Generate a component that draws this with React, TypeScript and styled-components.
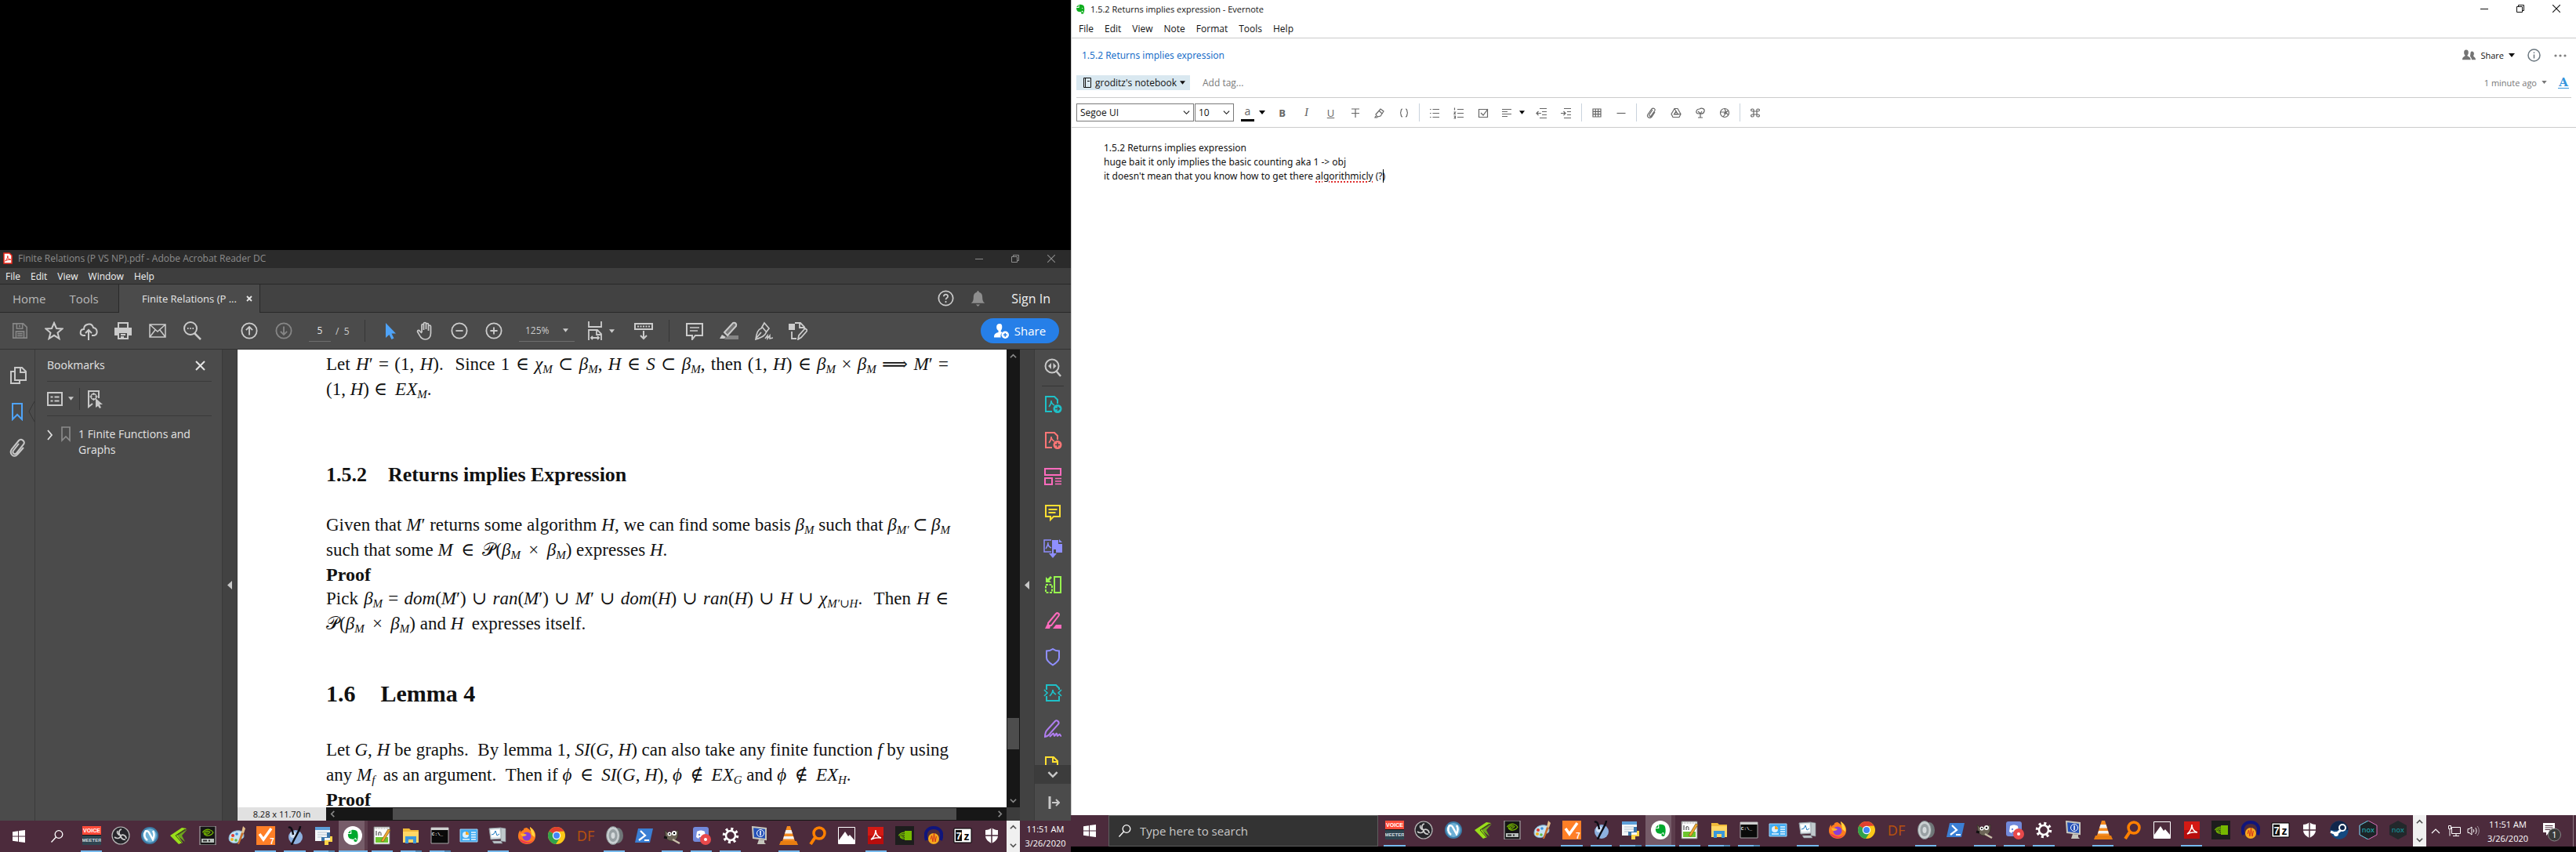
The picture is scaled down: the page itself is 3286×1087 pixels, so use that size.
import React from "react";
import styled, { createGlobalStyle, css } from "styled-components";

const ui = `"Open Sans", "Noto Sans", sans-serif`;
const serif = `"Liberation Serif", "DejaVu Serif", serif`;

const GlobalStyle = createGlobalStyle`
  *, *::before, *::after { box-sizing: border-box; }
  body { margin: 0; background: #000; font-family: ${ui}; font-size: 12px; }
  button, input, select { font: inherit; color: inherit; margin: 0; padding: 0; border: 0; background: none; border-radius: 0; outline: none; }
  svg { display: block; flex: none; }
  h1, h2, h3, p { margin: 0; font-size: inherit; font-weight: normal; }
`;

/* ---------- shared pieces ---------- */

const Desktop = styled.div`
  display: grid;
  grid-template-columns: minmax(0, 1366fr) minmax(0, 1920fr);
  height: 100vh;
  overflow: hidden;
`;

const LeftMonitor = styled.div`
  display: flex;
  flex-direction: column;
  min-height: 0;
`;

const EmptyScreen = styled.div`
  flex: 319 0 0;
`;

const LeftScreen = styled.div`
  flex: 768 0 0;
  min-height: 0;
  display: flex;
  flex-direction: column;
`;

const RightMonitor = styled.div`
  display: flex;
  flex-direction: column;
  min-height: 0;
  padding-bottom: 7px;
`;

type IconProps = { size?: number; children: React.ReactNode; box?: number };

const Stroke = ({ size = 24, box = 24, children }: IconProps) => (
  <svg width={size} height={size} viewBox={`0 0 ${box} ${box}`} fill="none" stroke="currentColor" strokeWidth="2" aria-hidden="true">
    {children}
  </svg>
);

const Art = ({ size = 24, box = 24, children }: IconProps) => (
  <svg width={size} height={size} viewBox={`0 0 ${box} ${box}`} aria-hidden="true">
    {children}
  </svg>
);

const Caret = ({ w = 8, h = 5 }: { w?: number; h?: number }) => (
  <svg width={w} height={h} viewBox="0 0 8 5" aria-hidden="true">
    <path d="M0 0h8L4 5z" fill="currentColor" />
  </svg>
);

const WindowControls = styled.div<{ $tone: string }>`
  display: flex;
  margin-left: auto;
  color: ${(p) => p.$tone};
`;

const WindowButton = styled.button`
  width: 46px;
  height: 20px;
  display: grid;
  place-items: center;
`;

const Controls = ({ tone }: { tone: string }) => (
  <WindowControls $tone={tone}>
    <WindowButton aria-label="Minimize">
      <svg width="10" height="10" stroke="currentColor"><path d="M0 5.5h10" /></svg>
    </WindowButton>
    <WindowButton aria-label="Restore">
      <svg width="10" height="10" stroke="currentColor" fill="none"><path d="M.5 2.500h7v7h-7zM2.500 2.500v-2h7v7h-2" /></svg>
    </WindowButton>
    <WindowButton aria-label="Close">
      <svg width="10" height="10" stroke="currentColor" strokeWidth="1.100"><path d="M0 0l10 10M10 0L0 10" /></svg>
    </WindowButton>
  </WindowControls>
);

/* ---------- Acrobat ---------- */

const Acrobat = styled.section`
  flex: 1;
  min-height: 0;
  display: flex;
  flex-direction: column;
  background: #4b4b4b;
  color: #d2d2d2;
`;

const AcroTitle = styled.header`
  height: 23px;
  display: flex;
  align-items: center;
  gap: 7px;
  padding: 0 2px 2px 4px;
  background: #2b2b2b;
  color: #8c8c8c;
`;

const AcroMenu = styled.nav`
  height: 21px;
  display: flex;
  align-items: center;
  gap: 13px;
  padding-left: 7px;
  background: #3e3e3e;
  color: #f2f2f2;
  border-bottom: 1px solid #292929;
`;

const TabStrip = styled.div`
  height: 36px;
  display: flex;
  background: #424242;
`;

const HomeTabs = styled.div`
  width: 152px;
  display: flex;
  align-items: center;
  gap: 30px;
  padding-left: 16px;
  font-size: 15px;
  color: #b9b9b9;
  border-right: 1px solid #292929;
  border-bottom: 1px solid #292929;
`;

const FileTab = styled.div`
  width: 179px;
  display: flex;
  align-items: center;
  justify-content: space-between;
  padding: 0 9px 0 29px;
  font-size: 13px;
  background: #4b4b4b;
  color: #e6e6e6;
`;

const TabTail = styled.div`
  flex: 1;
  display: flex;
  align-items: center;
  justify-content: flex-end;
  border-left: 1px solid #292929;
  border-bottom: 1px solid #292929;
  padding-right: 26px;
  gap: 20px;
  color: #f0f0f0;
`;

const SignIn = styled.button`
  padding-left: 12px;
  font-size: 16px;
`;

const DimButton = styled.button<{ $tone?: string }>`
  display: grid;
  place-items: center;
  color: ${(p) => p.$tone || "inherit"};
`;

const AcroToolbar = styled.div`
  height: 47px;
  display: flex;
  align-items: center;
  padding: 0 15px 0 3px;
  border-bottom: 1px solid #333;
  color: #cbcbcb;
`;

const Tool = styled.button<{ $tone?: string }>`
  width: 44px;
  height: 44px;
  display: flex;
  align-items: center;
  justify-content: center;
  gap: 6px;
  color: ${(p) => p.$tone || "inherit"};
`;

const Gap = styled.span<{ $w: number }>`
  flex: 0 0 ${(p) => p.$w}px;
`;

const ToolDivider = styled.span<{ $before: number }>`
  width: 1px;
  height: 28px;
  margin: 0 10px 0 ${(p) => p.$before}px;
  background: #363636;
`;

const PageInput = styled.input`
  width: 28px;
  height: 28px;
  text-align: center;
  border-bottom: 1px solid #6e6e6e;
  margin: 0 6px 0 10px;
  color: #e6e6e6;
`;

const PageCount = styled.span`
  width: 17px;
  white-space: pre;
`;

const ZoomBox = styled.label`
  width: 71px;
  height: 28px;
  display: flex;
  align-items: center;
  justify-content: space-between;
  margin: 0 10px;
  padding: 0 8px;
  border-bottom: 1px solid #6e6e6e;
`;

const BareSelect = styled.select`
  appearance: none;
  flex: 1;
  min-width: 0;
`;

const ShareButton = styled.button`
  width: 100px;
  height: 32px;
  margin-left: auto;
  border-radius: 16px;
  background: #267fe8;
  color: #fff;
  display: flex;
  align-items: center;
  justify-content: center;
  gap: 7px;
  font-size: 15px;
`;

const AcroBody = styled.div`
  flex: 1;
  min-height: 0;
  display: flex;
`;

const NavRail = styled.nav`
  width: 45px;
  border-right: 1px solid #3a3a3a;
  display: flex;
  flex-direction: column;
  align-items: stretch;
  padding-top: 10px;
  color: #c8c8c8;
`;

const NavButton = styled.button<{ $active?: boolean }>`
  height: 46px;
  display: flex;
  align-items: center;
  justify-content: space-between;
  padding-left: 11px;
  color: ${(p) => (p.$active ? "#4fa3f7" : "inherit")};
`;

const Bookmarks = styled.aside`
  width: 239px;
  border-right: 1px solid #3a3a3a;
  padding: 0 13px 0 15px;
  font-size: 14px;
  line-height: 20px;
  color: #e4e4e4;
`;

const BookmarksHead = styled.div`
  height: 41px;
  display: flex;
  align-items: center;
  justify-content: space-between;
  padding-right: 8px;
  border-bottom: 1px solid #3a3a3a;
`;

const BookmarksTools = styled.div`
  height: 44px;
  display: flex;
  align-items: center;
  gap: 7px;
  color: #c8c8c8;
  border-bottom: 1px solid #3a3a3a;
`;

const BookmarkRow = styled.button`
  display: flex;
  align-items: flex-start;
  gap: 10px;
  padding-top: 13px;
  width: 100%;
  text-align: left;
  white-space: nowrap;
`;

const Splitter = styled.div`
  width: 19px;
  background: #424242;
  border-right: 1px solid #3a3a3a;
  display: grid;
  place-items: center;
  color: #c8c8c8;
`;

const DocPane = styled.main`
  flex: 1;
  min-width: 0;
  display: flex;
  flex-direction: column;
`;

const Page = styled.article`
  flex: 1;
  min-height: 0;
  overflow: hidden;
  background: #fff;
  color: #111;
  padding: 3px 74px 0 113px;
  font-family: ${serif};
  font-size: 23px;
`;

const Line = styled.p<{ $full?: boolean }>`
  line-height: 32px;
  white-space: nowrap;
  ${(p) => p.$full && css`text-align: justify; text-align-last: justify;`}
  sub { font-size: 15px; line-height: 0; vertical-align: -4px; }
`;

const ProofTitle = styled.h3`
  font-size: 24px;
  font-weight: bold;
  line-height: 30px;
`;

const Subsection = styled.h2`
  display: flex;
  gap: 27px;
  font-size: 26px;
  font-weight: bold;
  line-height: 32px;
  margin: 77px 0 32px;
`;

const Section = styled.h1`
  display: flex;
  gap: 32px;
  font-size: 30px;
  font-weight: bold;
  line-height: 32px;
  margin: 57px 0 40px;
`;

const HScroll = styled.div`
  height: 17px;
  display: flex;
  background: #171717;
  color: #8a8a8a;
`;

const PageSize = styled.span`
  width: 113px;
  background: #e1e1e1;
  color: #111;
  text-align: center;
  font-size: 11px;
  line-height: 17px;
`;

const ScrollEnd = styled.button`
  width: 17px;
  height: 17px;
  display: grid;
  place-items: center;
`;

const HTrack = styled.div`
  flex: 1;
  padding: 1px 47px 1px 68px;
`;

const Thumb = styled.div<{ $h: number }>`
  height: ${(p) => p.$h}px;
  background: #4d4d4d;
`;

const VScroll = styled.div`
  width: 17px;
  display: flex;
  flex-direction: column;
  background: #171717;
  color: #8a8a8a;
`;

const VTrack = styled.div`
  flex: 1;
  display: flex;
  flex-direction: column;
  justify-content: flex-end;
  padding: 0 1px 57px;
`;

const Corner = styled.div`
  height: 17px;
  background: #3c3c3c;
`;

const ToolRail = styled.aside`
  width: 46px;
  display: flex;
  flex-direction: column;
  color: #c8c8c8;
`;

const RailFirst = styled.div`
  height: 47px;
  display: flex;
  justify-content: center;
  align-items: center;
  margin: 0 9px;
  border-bottom: 1px solid #363636;
`;

const RailList = styled.div`
  flex: 1;
  min-height: 0;
  overflow: hidden;
  display: flex;
  flex-direction: column;
`;

const RailTool = styled.button<{ $tone: string }>`
  flex: 0 0 46px;
  display: grid;
  place-items: center;
  color: ${(p) => p.$tone};
`;

const RailMore = styled.button`
  height: 24px;
  background: #3c3c3c;
  display: grid;
  place-items: center;
`;

const RailExport = styled.button`
  height: 47px;
  display: grid;
  place-items: center;
`;

const TriLeft = () => (
  <svg width="6" height="11" aria-hidden="true"><path d="M6 0v11L0 5.500z" fill="currentColor" /></svg>
);

const Chev = ({ dir, size = 9, weight = 1.8 }: { dir: "up" | "down" | "left" | "right"; size?: number; weight?: number }) => {
  const d = { up: "M1 7l4-4 4 4", down: "M1 3l4 4 4-4", left: "M7 1L3 5l4 4", right: "M3 1l4 4-4 4" }[dir];
  return (
    <svg width={size} height={size} viewBox="0 0 10 10" fill="none" stroke="currentColor" strokeWidth={weight} aria-hidden="true">
      <path d={d} />
    </svg>
  );
};

const railTools: { label: string; tone: string; art: React.ReactNode }[] = [
  { label: "Export PDF", tone: "#1fc0c7", art: <><path d="M11 21H3V2h11l4 4v5" /><path d="M7 15c2-2 3-4 3-8 0 3 2 5 4 6" strokeWidth="1.500" /><circle cx="18" cy="17.500" r="5.500" fill="currentColor" stroke="none" /><path d="M15 17.500h5M18 15l2.500 2.500L18 20" stroke="#4b4b4b" strokeWidth="1.500" /></> },
  { label: "Create PDF", tone: "#ff7676", art: <><path d="M11 21H3V2h11l4 4v5" /><path d="M7 15c2-2 3-4 3-8 0 3 2 5 4 6" strokeWidth="1.500" /><circle cx="18" cy="17.500" r="5.500" fill="currentColor" stroke="none" /><path d="M15 17.500h6M18 14.500v6" stroke="#4b4b4b" strokeWidth="1.500" /></> },
  { label: "Edit PDF", tone: "#ff6bbd", art: <><path d="M2 2h20v8H2zM2 14h9v8H2z" /><path d="M15 14.500h8M15 18h8M15 21.500h8" strokeWidth="1.300" /></> },
  { label: "Comment", tone: "#ffdf32", art: <><path d="M3 3h18v14h-8l-4 4v-4H3z" /><path d="M6.500 8h11M6.500 12h9" /></> },
  { label: "Combine Files", tone: "#8f8fff", art: <><path d="M10 16H1V1h9M6 4c0 4-1 5-3 8M6 6c0 3 2 4 4 5" strokeWidth="1.500" /><path d="M11 1h8v5h5v11h-8v-4h-5zM20 0l4 4h-4z" fill="currentColor" stroke="none" /><path d="M12 10v8" /><path d="M7 18h10l-5 6z" fill="currentColor" stroke="none" /></> },
  { label: "Organize Pages", tone: "#97f84f", art: <><path d="M14 2h8v20h-8z" /><path d="M3 12h8v10H3z" strokeDasharray="3 1.500" /><path d="M3 9V2l2.500 2.500L9 1l2 2-3.500 3.500L10 9z" fill="currentColor" stroke="none" /></> },
  { label: "Redact", tone: "#ff6bbd", art: <><path d="M6 15L16 3c2-2 5 0 3.500 2.500L10 18H6z" /><path d="M2 22l3-6 4 3-1 3zM12 22l4-5h7v5z" fill="currentColor" stroke="none" /></> },
  { label: "Protect", tone: "#8f8fff", art: <path d="M12 2c2 1.500 5 2.500 8 2.500V13c0 4-4 7-8 9.500C8 20 4 17 4 13V4.500C7 4.500 10 3.500 12 2z" /> },
  { label: "Optimize PDF", tone: "#1fc0c7", art: <><path d="M4 8V2h12l4 4v2M4 16v6h16v-6" /><path d="M1 8l4 4-4 4M23 8l-4 4 4 4M8 16c2-2 4-4 4-8 0 3 2 5 4 6" strokeWidth="1.700" /></> },
  { label: "Fill & Sign", tone: "#b07ef0", art: <><path d="M2 22c0-4 1-7 3-9L15 2c2-2 6 1 4 4L9 17c-1 2-3 4-7 5zM8 22l4-4c2-1 1 3 2 3s2-4 3-3 0 3 1 3 2-3 3-2 0 2 2 2" /></> },
  { label: "Send for Review", tone: "#ffdf32", art: <><path d="M10 22H3V2h10l5 5v5M12 2v6h6" /><path d="M12 18l11-5-4 10z" fill="currentColor" stroke="none" /></> },
];

const AcrobatWindow = () => (
  <Acrobat aria-label="Adobe Acrobat Reader DC">
    <AcroTitle>
      <svg width="12" height="15" viewBox="0 0 12 15" aria-hidden="true">
        <path d="M1 1h7l3 3v10H1z" fill="#fff" stroke="#f0281a" strokeWidth="1.500" />
        <path d="M2.500 11C5 9 5.800 7 5.800 4.500c0 3 1.500 4.500 4 4.700-3 0-5 .4-7.300 1.800z" fill="none" stroke="#f0281a" />
      </svg>
      <span>Finite Relations (P VS NP).pdf - Adobe Acrobat Reader DC</span>
      <Controls tone="#8c8c8c" />
    </AcroTitle>
    <AcroMenu>
      {["File", "Edit", "View", "Window", "Help"].map((m) => <button key={m}>{m}</button>)}
    </AcroMenu>
    <TabStrip>
      <HomeTabs><button>Home</button><button>Tools</button></HomeTabs>
      <FileTab>
        <span>Finite Relations (P ...</span>
        <DimButton aria-label="Close tab"><Stroke size={8} box={8}><path d="M1 1l6 6M7 1L1 7" strokeWidth="1.800" /></Stroke></DimButton>
      </FileTab>
      <TabTail>
        <DimButton aria-label="Help" $tone="#cbcbcb">
          <Stroke size={21}><circle cx="12" cy="12" r="10.500" /><path d="M9 9.500c0-4 6-4 6 0 0 2-3 2-3 4.500M12 16v2.500" /></Stroke>
        </DimButton>
        <DimButton aria-label="Notifications" $tone="#8e8e8e">
          <Art size={21}><path d="M12 1c1 0 1.500 1 1.500 2 4 1 5 4 5 8 0 4 1 6 3.500 8H2c2.500-2 3.500-4 3.500-8 0-4 1-7 5-8C10.500 2 11 1 12 1zM9 21h6l-3 3z" fill="currentColor" /></Art>
        </DimButton>
        <SignIn>Sign In</SignIn>
      </TabTail>
    </TabStrip>
    <AcroToolbar>
      <Tool aria-label="Save" $tone="#868686"><Stroke size={22}><path d="M3 2h14l5 5v15H3zM8 2v7h8V2M12 4v3M7 22v-9h11v9M9 16h7M9 19h7" strokeWidth="1.800" /></Stroke></Tool>
      <Tool aria-label="Star"><Stroke><path d="M12 2l3 7 7.500.5-6 5 2 7.500-6.500-4.200L5.500 22l2-7.500-6-5L9 9z" /></Stroke></Tool>
      <Tool aria-label="Upload"><Stroke><path d="M8 18H5c-5-1-4-8 1-8 0-7 10-9 12-2 6 1 6 9 1 10h-3M12 24V11M8 15l4-4 4 4" /></Stroke></Tool>
      <Tool aria-label="Print"><Stroke><path d="M6 8V2h12v6M6 14h12v8H6zM9 17h6M9 20h4" /><path d="M1 8h22v10h-4v-5H5v5H1z" fill="currentColor" stroke="none" /></Stroke></Tool>
      <Tool aria-label="Email"><Stroke><path d="M2 4h20v16H2zM2 4l10 9L22 4M2 20l7-9M22 20l-7-9" strokeWidth="1.500" /></Stroke></Tool>
      <Tool aria-label="Find"><Stroke><circle cx="10" cy="9" r="8" /><path d="M15 15l8 8" strokeWidth="2.500" /><path d="M6 9h1.500M9.300 9h1.500M12.500 9H14" /></Stroke></Tool>
      <Gap $w={29} />
      <Tool aria-label="Previous page"><Stroke size={22}><circle cx="12" cy="12" r="10.500" /><path d="M12 18V7M7.500 11L12 6.500l4.500 4.500" /></Stroke></Tool>
      <Tool aria-label="Next page" $tone="#868686"><Stroke size={22}><circle cx="12" cy="12" r="10.500" /><path d="M12 6v11M7.500 13l4.500 4.500 4.500-4.500" /></Stroke></Tool>
      <PageInput aria-label="Page number" defaultValue="5" />
      <PageCount>/  5</PageCount>
      <ToolDivider $before={20} />
      <Tool aria-label="Select" $tone="#4fa3f7"><Art><path d="M6 2v19l4.500-4 3 6 3-1.500-3-6H19z" fill="currentColor" /></Art></Tool>
      <Tool aria-label="Pan"><Stroke><path d="M8 14V5c0-2 2.500-2 2.500 0v6M10.500 10V3c0-2 3-2 3 0v7M13.500 10V4c0-2 3-2 3 0v8M16.500 11V6.500c0-2 3-2 3 0V15c0 5-3 8-7 8-5 0-6-3-10-10 0-2 2-2 3-.5L8 15" strokeWidth="1.700" /></Stroke></Tool>
      <Tool aria-label="Zoom out"><Stroke size={22}><circle cx="12" cy="12" r="10.500" /><path d="M7 12h10" /></Stroke></Tool>
      <Tool aria-label="Zoom in"><Stroke size={22}><circle cx="12" cy="12" r="10.500" /><path d="M7 12h10M12 7v10" /></Stroke></Tool>
      <ZoomBox>
        <BareSelect aria-label="Zoom level" defaultValue="125%"><option>125%</option></BareSelect>
        <Caret w={7} />
      </ZoomBox>
      <Tool aria-label="Fit width"><Stroke><path d="M4 0v7h16V0M4 24V11h11l5 5v8M14 11v6h6M7 21h10M9 19l-2 2 2 2M15 19l2 2-2 2" strokeWidth="1.800" /></Stroke><Caret w={7} /></Tool>
      <Gap $w={12} />
      <Tool aria-label="Scroll mode"><Stroke><path d="M1 3h22v7H1zM12 12v10M8 18l4 4 4-4" /><path d="M4 6.500h16" strokeDasharray="2 1.500" /></Stroke></Tool>
      <ToolDivider $before={10} />
      <Tool aria-label="Comment"><Stroke><path d="M2 3h20v15h-9l-4 5v-5H2z" /><path d="M6 8h12M6 12h10" strokeWidth="1.500" /></Stroke></Tool>
      <Tool aria-label="Highlight"><Stroke><path d="M10 18h14v5H6z" fill="#858585" stroke="none" /><path d="M6 14L17 2c3-1 5 1 4 4L10 18z" fill="#777" /><path d="M0 22l3-5 5 3-2 2z" fill="currentColor" stroke="none" /></Stroke></Tool>
      <Tool aria-label="Sign"><Stroke><path d="M13 2l6 7-3 4c-2 5-5 7-14 10 1-8 3-13 7-14zM3 21l6-7M10 7l6 7" strokeWidth="1.700" /><path d="M14 22l3-4v4l3-4v4l4-1" strokeWidth="1.500" /></Stroke></Tool>
      <Tool aria-label="More tools"><Stroke><path d="M0 3h8v8H0z" fill="currentColor" stroke="none" /><path d="M8 2h7l5 5v3M14 2v6h6M4 13v9h6M12 23l1-5 8-9 3 2.500-8 9z" strokeWidth="1.800" /></Stroke></Tool>
      <ShareButton>
        <Art size={19}><path d="M9 0c3 0 4 2 4 5s-1 5-2 6v2l3 1c-3 2-4 5-3 8H0c0-6 3-7 7-8v-3C5 10 4 8 4 5s2-5 5-5z" fill="#fff" /><circle cx="18" cy="18" r="6" fill="#fff" /><path d="M15 18h6M18 15v6" stroke="#267fe8" strokeWidth="1.800" /></Art>
        Share
      </ShareButton>
    </AcroToolbar>
    <AcroBody>
      <NavRail>
        <NavButton aria-label="Page thumbnails"><Stroke><path d="M8 6V2h9l5 5v11H8V6M15 2v6h7M7 7H3v15h11v-4" /></Stroke></NavButton>
        <NavButton aria-label="Bookmarks" $active>
          <Stroke><path d="M5 2h12v20l-6-6-6 6z" /></Stroke>
          <svg width="8" height="26" aria-hidden="true"><path d="M8 0L1 13l7 13" fill="none" stroke="#353535" /></svg>
        </NavButton>
        <NavButton aria-label="Attachments"><Stroke><path d="M13 6l-7 9c-2 3 2 6 4 3l9-11c3-4-3-8-6-5L4 13c-4 6 3 12 7 7l8-9" transform="translate(0 1)" /></Stroke></NavButton>
      </NavRail>
      <Bookmarks>
        <BookmarksHead>
          <h2>Bookmarks</h2>
          <DimButton aria-label="Close bookmarks"><Stroke size={13} box={13}><path d="M1 1l11 11M12 1L1 12" /></Stroke></DimButton>
        </BookmarksHead>
        <BookmarksTools>
          <Stroke size={20} box={20}><path d="M1 2h18v16H1z" /><path d="M4.500 7.500h3M9.500 7.500h6M4.500 12.500h3M9.500 12.500h6" /></Stroke>
          <Caret w={7} />
          <svg width="1" height="28" aria-hidden="true"><path d="M0 0h1v28H0z" fill="#363636" /></svg>
          <Stroke size={24}><path d="M9 18l-5 4V2h13v9" /><circle cx="10.500" cy="9" r="3.500" strokeWidth="1.500" /><path d="M10.500 4v3M10.500 11v3M5.500 9h3M12.500 9h3" strokeWidth="1.500" /><path d="M13 11v12l3-2 2 3 2-1-2-4h4z" fill="currentColor" stroke="none" /></Stroke>
        </BookmarksTools>
        <BookmarkRow>
          <svg width="8" height="20" fill="none" stroke="#dedede" strokeWidth="1.800" aria-hidden="true"><path d="M1 5l5 6-5 6" /></svg>
          <svg width="12" height="20" fill="none" stroke="#8c8c8c" strokeWidth="1.600" aria-hidden="true"><path d="M1 1h10v17l-5-5-5 5z" /></svg>
          <span>1 Finite Functions and<br />Graphs</span>
        </BookmarkRow>
      </Bookmarks>
      <Splitter><TriLeft /></Splitter>
      <DocPane>
        <Page>
          <Line $full>Let <i>H</i>′ = (1, <i>H</i>). &nbsp;Since 1 ∈ <i>χ<sub>M</sub></i> ⊂ <i>β<sub>M</sub></i>, <i>H</i> ∈ <i>S</i> ⊂ <i>β<sub>M</sub></i>, then (1, <i>H</i>) ∈ <i>β<sub>M</sub></i> × <i>β<sub>M</sub></i> ⟹ <i>M</i>′ =</Line>
          <Line>(1, <i>H</i>) ∈ &thinsp;<i>EX<sub>M</sub></i>.</Line>
          <Subsection><span>1.5.2</span><span>Returns implies Expression</span></Subsection>
          <Line $full>Given that <i>M</i>′ returns some algorithm <i>H</i>, we can find some basis <i>β<sub>M</sub></i> such that <i>β<sub>M′</sub></i>&thinsp;⊂&thinsp;<i>β<sub>M</sub></i></Line>
          <Line>such that some <i>M</i> &thinsp;∈ &thinsp;𝒫(<i>β<sub>M</sub></i> &thinsp;× &thinsp;<i>β<sub>M</sub></i>) expresses <i>H</i>.</Line>
          <ProofTitle>Proof</ProofTitle>
          <Line $full>Pick <i>β<sub>M</sub></i> = <i>dom</i>(<i>M</i>′) ∪ <i>ran</i>(<i>M</i>′) ∪ <i>M</i>′ ∪ <i>dom</i>(<i>H</i>) ∪ <i>ran</i>(<i>H</i>) ∪ <i>H</i> ∪ <i>χ<sub>M′∪H</sub></i>. &nbsp;Then <i>H</i> ∈</Line>
          <Line>𝒫(<i>β<sub>M</sub></i> &thinsp;× &thinsp;<i>β<sub>M</sub></i>) and <i>H</i> &thinsp;expresses itself.</Line>
          <Section><span>1.6</span><span>Lemma 4</span></Section>
          <Line $full>Let <i>G</i>, <i>H</i> be graphs. &nbsp;By lemma 1, <i>SI</i>(<i>G</i>, <i>H</i>) can also take any finite function <i>f</i> by using</Line>
          <Line>any <i>M<sub>f</sub></i> &thinsp;as an argument. &nbsp;Then if <i>ϕ</i> &thinsp;∈ &thinsp;<i>SI</i>(<i>G</i>, <i>H</i>), <i>ϕ</i> &thinsp;∉ &thinsp;<i>EX<sub>G</sub></i> and <i>ϕ</i> &thinsp;∉ &thinsp;<i>EX<sub>H</sub></i>.</Line>
          <ProofTitle>Proof</ProofTitle>
        </Page>
        <HScroll>
          <PageSize>8.28 x 11.70 in</PageSize>
          <ScrollEnd aria-label="Scroll left"><Chev dir="left" /></ScrollEnd>
          <HTrack><Thumb $h={15} /></HTrack>
          <ScrollEnd aria-label="Scroll right"><Chev dir="right" /></ScrollEnd>
        </HScroll>
      </DocPane>
      <VScroll>
        <ScrollEnd aria-label="Scroll up"><Chev dir="up" /></ScrollEnd>
        <VTrack><Thumb $h={40} /></VTrack>
        <ScrollEnd aria-label="Scroll down"><Chev dir="down" /></ScrollEnd>
        <Corner />
      </VScroll>
      <Splitter><TriLeft /></Splitter>
      <ToolRail>
        <RailFirst>
          <Stroke><circle cx="11" cy="10" r="8.500" /><path d="M16 16l6 7" strokeWidth="2.500" /><path d="M10 6v8l-4-4zM12.500 6v8l4-4z" fill="currentColor" stroke="none" /></Stroke>
        </RailFirst>
        <RailList>
          {railTools.map((t) => (
            <RailTool key={t.label} aria-label={t.label} $tone={t.tone}><Stroke>{t.art}</Stroke></RailTool>
          ))}
        </RailList>
        <RailMore aria-label="More tools"><Chev dir="down" size={14} /></RailMore>
        <RailExport aria-label="Collapse pane">
          <Stroke size={18} box={18}><path d="M5 1v16" strokeWidth="3" /><path d="M8 9h8M13 5l4 4-4 4" /></Stroke>
        </RailExport>
      </ToolRail>
    </AcroBody>
  </Acrobat>
);

/* ---------- Evernote ---------- */

const Evernote = styled.section`
  flex: 1;
  min-height: 0;
  display: flex;
  flex-direction: column;
  background: #fff;
  color: #111;
  border-left: 1px solid #c8c8c8;
`;

const NoteTitleBar = styled.header`
  height: 24px;
  display: flex;
  align-items: center;
  gap: 6px;
  padding: 0 2px 2px 5px;
  font-size: 11px;
`;

const NoteMenu = styled.nav`
  height: 25px;
  display: flex;
  align-items: center;
  gap: 14px;
  padding-left: 9px;
  border-bottom: 1px solid #cbcbcb;
`;

const NoteHead = styled.div`
  height: 43px;
  display: flex;
  align-items: center;
  justify-content: space-between;
  padding: 0 12px 0 13px;
`;

const NoteName = styled.input`
  width: 400px;
  font-family: "Noto Sans", sans-serif;
  color: #1a6fc9;
`;

const HeadActions = styled.div`
  display: flex;
  align-items: center;
  gap: 6px;
  font-size: 11px;
`;

const SoftButton = styled.button<{ $tone?: string }>`
  display: flex;
  align-items: center;
  gap: 6px;
  color: ${(p) => p.$tone || "inherit"};
`;

const TagRow = styled.div`
  height: 33px;
  display: flex;
  align-items: center;
  margin: 0 6px;
  padding-bottom: 6px;
  border-bottom: 1px solid #cbcbcb;
`;

const NotebookChip = styled.button`
  width: 145px;
  height: 19px;
  display: flex;
  align-items: center;
  gap: 4px;
  padding-left: 9px;
  background: #d9e8f0;
`;

const TagInput = styled.input`
  flex: 1;
  margin-left: 16px;
  &::placeholder { color: #7a7a7a; opacity: 1; }
`;

const TagActions = styled.div`
  display: flex;
  align-items: center;
  gap: 13px;
  padding-right: 2px;
  font-size: 11px;
  color: #767676;
`;

const FormatBar = styled.div`
  height: 38px;
  display: flex;
  align-items: center;
  padding-left: 6px;
  border-bottom: 1px solid #cbcbcb;
  color: #666;
`;

const SelectBox = styled.label<{ $w: number }>`
  width: ${(p) => p.$w}px;
  height: 23px;
  display: flex;
  align-items: center;
  margin-right: 1px;
  padding: 0 4px;
  border: 1px solid #7a7a7a;
  color: #111;
`;

const ColorButton = styled.button`
  width: 45px;
  height: 28px;
  display: flex;
  align-items: center;
  gap: 6px;
  padding-left: 8px;
  color: #000;
`;

const ColorSwatch = styled.span`
  width: 17px;
  height: 22px;
  line-height: 17px;
  border-bottom: 3px solid #000;
  font-size: 14px;
  color: #666;
`;

const Fmt = styled.button<{ $w?: number; $look?: string }>`
  width: ${(p) => p.$w || 31}px;
  height: 28px;
  display: flex;
  align-items: center;
  justify-content: center;
  gap: 8px;
  font-size: 13px;
  ${(p) => p.$look === "bold" && css`font-weight: bold;`}
  ${(p) => p.$look === "italic" && css`font-style: italic; font-family: ${serif}; font-size: 15px;`}
  ${(p) => p.$look === "under" && css`text-decoration: underline;`}
`;

const BlackCaret = styled.span`
  color: #000;
`;

const FmtDivider = styled.span`
  width: 1px;
  height: 23px;
  margin: 0 3px 0 4px;
  background: #c9d3dd;
`;

const NoteBody = styled.div`
  flex: 1;
  min-height: 0;
  padding: 17px 41px;
  font-family: "Noto Sans", sans-serif;
  font-size: 12px;
  line-height: 18px;
  outline: none;
`;

const Misspelled = styled.span`
  text-decoration: underline dotted #e03030 2px;
  text-underline-offset: 2px;
`;

const TextCursor = styled.span`
  border-left: 1px solid #000;
  margin-right: -1px;
`;

const Elephant = ({ size, tone }: { size: number; tone: string }) => (
  <Art size={size}>
    <path d="M7 6V2L2 7.500h4zM8.500 1.500C14 .5 19 2 20 6c1.500 6 1 12-1 16-1 2-6 2-6-1 0-2 2-3 3.500-2.500v2h1.500c0-3-1-5-3-4-1 3-4 2.500-6 2C4 18 2 15 2 9h6.500z" fill={tone} />
    <ellipse cx="16" cy="10" rx="1.300" ry="1" fill="#fff" />
  </Art>
);

const line = (d: string, extra?: React.ReactNode) => (
  <svg width="16" height="16" viewBox="0 0 16 16" fill="none" stroke="currentColor" strokeWidth="1.200" aria-hidden="true">
    <path d={d} />
    {extra}
  </svg>
);

const EvernoteWindow = () => (
  <Evernote aria-label="Evernote">
    <NoteTitleBar>
      <Elephant size={13} tone="#0fae1f" />
      <span>1.5.2 Returns implies expression - Evernote</span>
      <Controls tone="#111" />
    </NoteTitleBar>
    <NoteMenu>
      {["File", "Edit", "View", "Note", "Format", "Tools", "Help"].map((m) => <button key={m}>{m}</button>)}
    </NoteMenu>
    <NoteHead>
      <NoteName aria-label="Note title" defaultValue="1.5.2 Returns implies expression" />
      <HeadActions>
        <SoftButton>
          <Art size={17}><path d="M7 2c3 0 4 2 4 5s-1 4-2 5c0 3 6 2 6 8H0c0-6 5-5 5-8-1-1-2-2-2-5s1-5 4-5zM17 5c3 0 4 2 4 4s-1 3-1 4c0 2 4 2 4 7h-7c0-4-3-5-3-7 1-1 0-8 3-8z" fill="#747474" /></Art>
          Share
        </SoftButton>
        <SoftButton aria-label="Share options"><Caret /></SoftButton>
        <Gap $w={4} />
        <SoftButton aria-label="Note info" $tone="#6c7880">
          <svg width="17" height="17" viewBox="0 0 17 17" fill="none" stroke="currentColor" strokeWidth="1.500" aria-hidden="true"><circle cx="8.500" cy="8.500" r="7.500" /><path d="M8.500 7.500v5M8.500 4.500V6" /></svg>
        </SoftButton>
        <Gap $w={5} />
        <SoftButton aria-label="More" $tone="#808080">
          <svg width="16" height="4" fill="currentColor" aria-hidden="true"><circle cx="2" cy="2" r="1.600" /><circle cx="8" cy="2" r="1.600" /><circle cx="14" cy="2" r="1.600" /></svg>
        </SoftButton>
      </HeadActions>
    </NoteHead>
    <TagRow>
      <NotebookChip>
        <svg width="11" height="13" fill="none" stroke="#111" aria-hidden="true"><path d="M.5.5h9v12h-9zM2.500.5v12M5 4.500h3" /></svg>
        groditz's notebook
        <Caret w={7} />
      </NotebookChip>
      <TagInput aria-label="Add tag" placeholder="Add tag..." />
      <TagActions>
        <SoftButton>1 minute ago<Caret w={7} h={4} /></SoftButton>
        <SoftButton aria-label="Text style" $tone="#3595dc">
          <svg width="16" height="20" viewBox="0 0 16 20" aria-hidden="true">
            <text x="8" y="15" textAnchor="middle" fontFamily="DejaVu Serif" fontWeight="bold" fontSize="15" fill="currentColor">A</text>
            <path d="M1 17.500h14" stroke="currentColor" />
          </svg>
        </SoftButton>
      </TagActions>
    </TagRow>
    <FormatBar>
      <SelectBox $w={150}><BareSelect aria-label="Font" defaultValue="Segoe UI"><option>Segoe UI</option></BareSelect><Chev dir="down" weight={1.2} /></SelectBox>
      <SelectBox $w={50}><BareSelect aria-label="Font size" defaultValue="10"><option>10</option></BareSelect><Chev dir="down" weight={1.2} /></SelectBox>
      <ColorButton aria-label="Text colour"><ColorSwatch>a</ColorSwatch><Caret /></ColorButton>
      <Fmt $look="bold">B</Fmt>
      <Fmt $look="italic">I</Fmt>
      <Fmt $look="under">U</Fmt>
      <Fmt aria-label="Strikethrough">{line("M3 3h10M8 3v11M3 8.500h10")}</Fmt>
      <Fmt aria-label="Highlight">{line("M3 10l6-7 4 3-4 6-4 1zM3 12l-1 2h3M7 5l4 4")}</Fmt>
      <Fmt aria-label="Code">{line("M6 3C3 3 5 8 3 8c2 0 0 5 3 5M10 3c3 0 1 5 3 5-2 0 0 5-3 5")}</Fmt>
      <FmtDivider />
      <Fmt aria-label="Bulleted list">{line("M5.500 3.500H14M5.500 8.500H14M5.500 13.500H14M2 3.500h1.500M2 8.500h1.500M2 13.500h1.500")}</Fmt>
      <Fmt aria-label="Numbered list">{line("M6 3.500h8M6 8.500h8M6 13.500h8M2.500 1.500v3M1.500 7h2L2 9.500h2M1.500 12h2v3h-2M2 13.500h1.500")}</Fmt>
      <Fmt aria-label="Checkbox">{line("M2.500 3.500h11v10h-11zM5 8l3 3 6-8")}</Fmt>
      <Fmt aria-label="Align" $w={44}>{line("M2 3.500h12M2 6.500h7M2 9.500h12M2 12.500h7")}<BlackCaret><Caret w={7} /></BlackCaret></Fmt>
      <Fmt aria-label="Outdent">{line("M5 2.500h9M8 6.500h6M8 10.500h6M5 14.500h9M1 8.500h6M3.500 6L1 8.500 3.500 11")}</Fmt>
      <Fmt aria-label="Indent">{line("M5 2.500h9M9 6.500h5M9 10.500h5M5 14.500h9M1 8.500h6M4.500 6L7 8.500 4.500 11")}</Fmt>
      <FmtDivider />
      <Fmt aria-label="Table">{line("M3 3h10v10H3zM3 6.300h10M3 9.600h10M6.300 3v10M9.600 3v10")}</Fmt>
      <Fmt aria-label="Horizontal rule">{line("M2.500 8.500h11")}</Fmt>
      <FmtDivider />
      <Fmt aria-label="Attach">{line("M9 4l-4 6c-1 2 1 3 2 2l5-7c1-2-2-4-4-2L3 10c-2 3 2 6 5 3l4-6")}</Fmt>
      <Fmt aria-label="Drive">{line("M6 2.500h4l4 7-2 4H4l-2-4zM8 6l2.500 4h-5zM6 2.500L10.500 10M14 9.500H6")}</Fmt>
      <Fmt aria-label="Insert photo">{line("M8 14V9M5 14h6M5 9c-4-1-2-6 2-6 3-2 7 0 6 3-1 4-4 3-5 3zM5 6l3 3 2-3")}</Fmt>
      <Fmt aria-label="Camera">{line("M8 2.500L10 8l-4 5M2.500 7H9l4 4M13 5L7 9", <circle cx="8" cy="8" r="5.500" />)}</Fmt>
      <FmtDivider />
      <Fmt aria-label="Shortcuts">{line("M6 6v4h4V6zM6 6H4.500C2 6 2 3 4.300 3S6 4 6 6zM10 6h1.500C14 6 14 3 11.700 3S10 4 10 6zM6 10H4.500C2 10 2 13 4.300 13S6 12 6 10zM10 10h1.500c2.500 0 2.500 3 .2 3S10 12 10 10z")}</Fmt>
    </FormatBar>
    <NoteBody contentEditable suppressContentEditableWarning spellCheck={false} role="textbox" aria-label="Note">
      <p>1.5.2 Returns implies expression</p>
      <p>huge bait it only implies the basic counting aka 1 -&gt; obj</p>
      <p>it doesn't mean that you know how to get there <Misspelled>algorithmicly</Misspelled> (?<TextCursor />)</p>
    </NoteBody>
  </Evernote>
);

/* ---------- Taskbar ---------- */

const Bar = styled.footer`
  height: 40px;
  flex: none;
  display: flex;
  background: #4c2b3c;
  color: #fff;
`;

const BarButton = styled.button<{ $w: number }>`
  flex: 0 0 ${(p) => p.$w}px;
  display: grid;
  place-items: center;
`;

const SearchBox = styled.label`
  flex: 0 0 344px;
  display: flex;
  align-items: center;
  gap: 11px;
  padding-left: 12px;
  background: #333;
  border: 1px solid #5e5e5e;
`;

const SearchInput = styled.input`
  flex: 1;
  min-width: 0;
  font-size: 15px;
  &::placeholder { color: #c8c8c8; opacity: 1; }
`;

const Apps = styled.div`
  flex: 1;
  display: flex;
  min-width: 0;
`;

const AppButton = styled.button<{ $state?: string }>`
  flex: 1 1 0;
  min-width: 0;
  display: grid;
  grid-template-rows: 1fr 2px;
  justify-items: center;
  align-items: center;
  padding: 0 3px;
  ${(p) => p.$state === "active" && css`background: linear-gradient(90deg, #765c69 88%, #5c3d4c 88%);`}
  &::after {
    content: "";
    justify-self: stretch;
    height: 2px;
    margin: 0 ${(p) => (p.$state === "active" ? -3 : 2)}px;
    background: ${(p) =>
      !p.$state ? "none" : p.$state === "multi" ? "linear-gradient(90deg, #76b9ed 72%, #4f87b3 72%)" : "#76b9ed"};
  }
`;

const BarScroll = styled.div`
  flex: 0 0 17px;
  display: flex;
  flex-direction: column;
  justify-content: space-between;
  align-items: center;
  background: #f0f0f0;
  color: #505050;
`;

const Clock = styled.time<{ $w: number }>`
  flex: 0 0 ${(p) => p.$w}px;
  text-align: center;
  font-size: 11px;
  line-height: 18px;
  padding-top: 2px;
`;

const Tray = styled.div`
  display: flex;
  align-items: center;
  padding-right: 3px;
  border-right: 1px solid #8a7480;
  margin-right: 3px;
`;

const TrayButton = styled.button`
  width: 24px;
  height: 40px;
  display: grid;
  place-items: center;
`;

const label = (x: number, y: number, size: number, fill: string, t: string, font = "Liberation Sans", weight = "bold") => (
  <text x={x} y={y} textAnchor="middle" fontFamily={font} fontWeight={weight} fontSize={size} fill={fill}>{t}</text>
);

const nvidiaEye = (
  <path d="M2 12c3-5 9-7 14-5 3 1 5 3 6 5-3 5-9 7-14 5M5 12c3-4 8-4 11-1-2 4-7 5-9 3 1-2 4-3 6-2M8 17c-2-1-4-3-3-5" fill="none" stroke="#76b900" strokeWidth="1.800" />
);

const apps: { name: string; state?: string; art: React.ReactNode }[] = [
  { name: "Voicemeeter", state: "on", art: <><path d="M0 0h24v11H0z" fill="#ff4b3a" /><path d="M0 11h24v1H0z" fill="#111" /><path d="M0 12h24v12H0z" fill="#2f4550" />{label(12, 8, 7, "#fff", "VOICE")}{label(12, 20, 6, "#d5dde0", "MEETER")}</> },
  { name: "OBS", art: <><circle cx="12" cy="12" r="11" fill="#26252a" stroke="#b9b9b9" strokeWidth="1.200" /><path d="M13 4c-4 1-4 6-1 8 0 3-4 5-8 2M12 12c3-2 7 0 7 4M12 12c0 3 3 6 6 5M8 6c-1 2 0 5 4 6" fill="none" stroke="#ccc" strokeWidth="1.700" /></> },
  { name: "Nightly", art: <><circle cx="12" cy="12" r="11" fill="#3c7ba6" /><circle cx="12" cy="12" r="9" fill="#6fb1d6" /><path d="M6 7c2-1 4-1 5 1l5 9c2-4 2-8 0-11M7 6c-3 4-2 9 2 12" fill="none" stroke="#fff" strokeWidth="2.500" /></> },
  { name: "GeForce", art: <><path d="M1 12L16 2l6 1-12 8 7 10-5 2z" fill="#9adf1b" /><path d="M10 12L23 4l-7 8 4 8z" fill="#6da81b" /><path d="M8 12l12-8M8 12l8 9" stroke="#33480f" fill="none" /></> },
  { name: "NVIDIA Inspector", art: <><path d="M2 0h20v24H2z" fill="#151515" stroke="#bbb" /><g transform="translate(4 0) scale(.68)">{nvidiaEye}</g><path d="M4 16h16v5H4z" fill="#b9c0bc" /><path d="M6 17.500h5v2H6zM13 17.500h2v2h-2z" fill="#333" /></> },
  { name: "Paint", art: <><path d="M11 6c6-1 10 1 10 6 0 4-2 4-4 4s-1 2-3 4c-2 3-12 2-12-4C2 10 6 7 11 6z" fill="#c5e3f3" stroke="#7ba7c4" /><circle cx="7" cy="12" r="2" fill="#e03a2f" /><circle cx="12" cy="10" r="1.800" fill="#3b8fdd" /><circle cx="6" cy="17" r="2" fill="#f0b323" /><circle cx="11" cy="18" r="1.800" fill="#5eb948" /><path d="M13 23l5-15 3 1-6 14z" fill="#c9702c" /><path d="M18 8l2-8 3 3-2 6z" fill="#e6c08c" /></> },
  { name: "Tasks", state: "on", art: <><path d="M0 0h24v24H0z" fill="#ff7f27" /><path d="M4 10l5 7L19 3" fill="none" stroke="#fff" strokeWidth="3.500" />{label(20, 23, 10, "#fff", "7")}</> },
  { name: "Yacreader", state: "on", art: <><circle cx="13" cy="14" r="9" fill="#8db0df" /><circle cx="10" cy="11" r="4" fill="#cfe0f5" /><path d="M4 2c3-2 5 2 6 9M19 0c0 5-7 14-11 24" fill="none" stroke="#0c0c14" strokeWidth="2.500" /></> },
  { name: "Python", state: "multi", art: <><path d="M1 1h19v18H1z" fill="#f4f6f8" /><path d="M1 1h19v4H1z" fill="#5d9ed8" /><path d="M4 8h12M4 11h12M4 14h6" stroke="#b6c3cf" /><path d="M16 8h4v7h-7v4H9v-5h7z" fill="#3c76ab" /><path d="M23 13v7h-5v4h-5v-6h7v-5z" fill="#ffd447" /></> },
  { name: "Evernote", state: "active", art: <><circle cx="12" cy="12" r="12" fill="#fff" /><g transform="translate(4.500 4) scale(.68)"><path d="M7 6V2L2 7.500h4zM8.500 1.500C14 .5 19 2 20 6c1.500 6 1 12-1 16-1 2-6 2-6-1 0-2 2-3 3.500-2.500v2h1.500c0-3-1-5-3-4-1 3-4 2.500-6 2C4 18 2 15 2 9h6.500z" fill="#00a82d" /></g></> },
  { name: "Notepad++", state: "on", art: <><path d="M2 1h20v22H2z" fill="#fdfdfd" stroke="#777" /><path d="M4 14h16v7H4z" fill="#6cc62e" /><path d="M5 6v6M8 8v4M8 8c3-1 3 0 3 4" fill="none" stroke="#333" /><path d="M3 3h18" stroke="#888" strokeDasharray="1 1" /><path d="M11 19L20 4l3 1-9 15z" fill="#f0a830" stroke="#7d5a1e" strokeWidth=".7" /></> },
  { name: "File Explorer", state: "multi", art: <><path d="M2 3h8l2 2h10v16H2z" fill="#f0b93a" /><path d="M2 7h20v14H2z" fill="#ffd766" /><path d="M5 13h14v9h-4v-5H9v5H5z" fill="#3a98dc" /></> },
  { name: "Command Prompt", state: "multi", art: <><path d="M1 2h22v20H1z" fill="#0a0a0a" stroke="#a8a8a8" /><path d="M1 2h22v3H1z" fill="#cfcfcf" />{label(9, 12, 6, "#eee", "C:\\_", "Liberation Mono")}</> },
  { name: "Control Panel", art: <><path d="M1 4h22v16H1z" fill="#3fa9f0" stroke="#9fd3f7" /><circle cx="8" cy="11" r="4" fill="#d9efff" /><path d="M8 11V7c3 0 4 2 4 4z" fill="#f5a623" /><path d="M15 8h6M15 11h6M15 14h6M4 17h9M15 17h6" fill="none" stroke="#e8f6ff" strokeWidth="1.500" /></> },
  { name: "Performance Monitor", state: "on", art: <><path d="M1 3l15-1 1 14-14 1z" fill="#dde4e8" stroke="#8f999f" /><path d="M3 5l11-.5 1 9-11 .5z" fill="#fff" /><path d="M4 11l3-1 2-4 2 6 3-2" fill="none" stroke="#1f7ac0" /><path d="M16 2l6 1v17l-6-1zM5 19h11l2 3H7z" fill="#c0c8cc" stroke="#7f8990" strokeWidth=".6" /></> },
  { name: "Firefox", art: <><path d="M12 2c2 1 4 3 5 4 0-2-1-3-1-5 5 3 8 8 7 13-1 6-6 9-11 9S1 19 1 13c0-4 1-6 3-8v3c1-2 3-3 4-3-1-2 2-3 4-3z" fill="#ff7d1f" /><path d="M16 1c5 4 7 8 6 13l-4-3c0-3-1-5-2-10z" fill="#ffd53e" /><circle cx="12" cy="13" r="5.500" fill="#8a3fd6" /><path d="M4 10c3-1 6 0 8 1-2 2-4 2-6 2z" fill="#ffb32c" /><path d="M2 16c3 7 14 9 19 1-3 3-7 4-10 3-4-1-6-3-9-4z" fill="#f0374e" /></> },
  { name: "Chrome", art: <><circle cx="12" cy="12" r="11" fill="#fbc918" /><path d="M12 12L2.500 6.500A11 11 0 0 1 21.500 6.500L12 7z" fill="#e0402f" /><path d="M12 12L2.500 6.500A11 11 0 0 0 11 23l5.500-8.500z" fill="#31a24c" /><circle cx="12" cy="12" r="5.200" fill="#fff" /><circle cx="12" cy="12" r="4" fill="#4286f5" /></> },
  { name: "Dwarf Fortress", art: label(12, 19, 18, "#b5500f", "DF", "Noto Sans", "normal") },
  { name: "Sound", state: "on", art: <><ellipse cx="16" cy="12" rx="7" ry="10" fill="#6f7678" /><ellipse cx="10" cy="12" rx="8.500" ry="11.500" fill="#c9cfd1" stroke="#7f8789" /><ellipse cx="10" cy="12" rx="5.500" ry="8" fill="#98a0a3" /><ellipse cx="10" cy="12" rx="2.500" ry="4" fill="#d5dadc" /></> },
  { name: "PowerShell", art: <><path d="M5 3h19l-4 18H1z" fill="#3b7fd4" /><path d="M8 6l6 6-8 6M13 18h6" fill="none" stroke="#fff" strokeWidth="2.200" /></> },
  { name: "GIMP", state: "on", art: <><path d="M2 5l4 4c5-1 8-1 13-4 0 7 0 10-4 13-6 3-11-1-12-5z" fill="#6d6557" stroke="#39332a" /><circle cx="8" cy="10" r="2.500" fill="#fff" /><circle cx="14" cy="9" r="3" fill="#fff" /><circle cx="8" cy="10" r="1" /><circle cx="14" cy="9" r="1.200" /><path d="M12 17l9 5" stroke="#c9c0aa" strokeWidth="2.500" /><path d="M1 14l4 1" stroke="#111" strokeWidth="3" /></> },
  { name: "Discord", state: "on", art: <><rect x="1" y="1" width="20" height="19" rx="3" fill="#7289da" /><path d="M6 7c3-2 7-2 10 0l1 7-3 2-1-2H9l-1 2-3-2z" fill="#fff" /><circle cx="9" cy="11" r="1.200" fill="#7289da" /><circle cx="17" cy="17" r="7" fill="#e8494b" /><circle cx="17" cy="17" r="2" fill="#fff" /></> },
  { name: "Settings", state: "on", art: <><circle cx="12" cy="12" r="6" fill="none" stroke="#fff" strokeWidth="2.500" /><circle cx="12" cy="12" r="8.500" fill="none" stroke="#fff" strokeWidth="3.500" strokeDasharray="3 3.675" /></> },
  { name: "Remote Desktop", art: <><path d="M3 1l17 2v14L4 15z" fill="#2451b8" stroke="#c6c6bd" strokeWidth="2" /><circle cx="13" cy="9" r="4.500" fill="#2451b8" stroke="#fff" /><path d="M13 6v6" stroke="#fff" strokeWidth="1.500" /><path d="M11 17l7 1v3l2 2H9z" fill="#c6c6bd" /></> },
  { name: "VLC", state: "on", art: <><path d="M10 0h4l6 19H4z" fill="#f58a1f" /><path d="M8.500 5h7l1.500 4.500H7zM6 13h12l1 3.500H5z" fill="#f2f2f2" /><path d="M2 19h20l2 5H0z" fill="#e87d10" /></> },
  { name: "Everything", art: <><circle cx="14" cy="9" r="7" fill="none" stroke="#ff8000" strokeWidth="3.500" /><path d="M9 14l-6 9" stroke="#ff8000" strokeWidth="4" /></> },
  { name: "Photos", art: <><path d="M1.500 1.500h21v21h-21z" fill="#4c2b3c" stroke="#fff" /><path d="M2 18l8-11 4 6 2-2 6 7v4H2z" fill="#fff" /></> },
  { name: "Acrobat Reader", state: "on", art: <><path d="M2 1h20v22H2z" fill="#b80d0d" /><path d="M2 1h20v11H2z" fill="#d41a14" /><path d="M6 17c4-3 6-7 6-12 0 6 3 9 7 10-5-1-9 0-13 2z" fill="none" stroke="#fff" strokeWidth="1.500" /></> },
  { name: "NVIDIA Control Panel", art: <><path d="M0 0h24v24H0z" fill="#1d1d1d" /><path d="M12 6h9v12h-9z" fill="#76b900" /><g transform="translate(3 4) scale(.68)">{nvidiaEye}</g></> },
  { name: "Audacity", art: <><path d="M3 18C-1 6 6 2 12 2s13 4 9 16" fill="none" stroke="#10157c" strokeWidth="4" /><ellipse cx="12" cy="16" rx="7" ry="7" fill="#f6a81c" /><path d="M8 17l1.500-5 1.500 8 1.500-11 1.500 11 1.500-7" fill="none" stroke="#d6341b" /></> },
  { name: "7-Zip", art: <><path d="M1 3h22v18H1z" fill="#fff" stroke="#000" /><path d="M3 5h8v14H3z" fill="#111" />{label(7, 17, 13, "#fff", "7")}{label(17, 18, 14, "#000", "z")}</> },
  { name: "Windows Security", art: <><path d="M12 2c2 2 5 3 8 3v7c0 5-4 8-8 10-4-2-8-5-8-10V5c3 0 6-1 8-3z" fill="#fff" /><path d="M12 1v22M4 12h16" stroke="#4c2b3c" strokeWidth="1.500" /></> },
];

const extraApps: typeof apps = [
  { name: "Steam", art: <><circle cx="12" cy="12" r="11.500" fill="#144a80" /><path d="M.5 12A11.500 11.500 0 0 1 23.500 12z" fill="#10264b" /><circle cx="16" cy="9" r="4" fill="none" stroke="#fff" strokeWidth="2" /><path d="M1 14l7 3 6-5" stroke="#fff" strokeWidth="3" fill="none" /><circle cx="8" cy="17" r="3" fill="#fff" /></> },
  { name: "Nox", art: <><path d="M12 0l11 6v12l-11 6L1 18V6z" fill="#1d2326" stroke="#d86fb8" strokeWidth="1" /><path d="M12 0L1 6v12l11 6" fill="none" stroke="#3cc0c6" />{label(12, 15, 9, "#22b6bd", "nox", "DejaVu Sans", "normal")}</> },
  { name: "Multi-Drive", art: <><path d="M12 0l11 6v12l-11 6L1 18V6z" fill="#22282b" />{label(12, 15, 9, "#159aa1", "nox", "DejaVu Sans", "normal")}</> },
];

const WinLogo = () => (
  <svg width="16" height="16" viewBox="0 0 16 16" fill="#fff" aria-hidden="true">
    <path d="M0 2.300l7-1v6.200H0zM8 1.100L16 0v7.500H8zM0 8.500h7v6.200l-7-1zM8 8.500h8V16l-8-1.100z" />
  </svg>
);

const Magnifier = () => (
  <svg width="16" height="16" viewBox="0 0 16 16" fill="none" stroke="#fff" strokeWidth="1.300" aria-hidden="true">
    <circle cx="10" cy="5.500" r="4.800" /><path d="M6.500 9L.5 15.500" />
  </svg>
);

const AppList = ({ items }: { items: typeof apps }) => (
  <Apps>
    {items.map((a) => (
      <AppButton key={a.name} aria-label={a.name} $state={a.state}><Art>{a.art}</Art></AppButton>
    ))}
  </Apps>
);

const Spinner = () => (
  <BarScroll><ScrollEnd aria-label="Scroll up"><Chev dir="up" /></ScrollEnd><ScrollEnd aria-label="Scroll down"><Chev dir="down" /></ScrollEnd></BarScroll>
);

export default function App() {
  return (
    <>
      <GlobalStyle />
      <Desktop>
        <LeftMonitor>
          <EmptyScreen />
          <LeftScreen>
            <AcrobatWindow />
            <Bar>
              <BarButton $w={48} aria-label="Start"><WinLogo /></BarButton>
              <BarButton $w={50} aria-label="Search"><Magnifier /></BarButton>
              <AppList items={apps} />
              <Spinner />
              <Clock $w={65}>11:51 AM<br />3/26/2020</Clock>
            </Bar>
          </LeftScreen>
        </LeftMonitor>
        <RightMonitor>
          <EvernoteWindow />
          <Bar>
            <BarButton $w={48} aria-label="Start"><WinLogo /></BarButton>
            <SearchBox><Magnifier /><SearchInput aria-label="Search" placeholder="Type here to search" /></SearchBox>
            <Gap $w={2} />
            <AppList items={[...apps, ...extraApps]} />
            <Spinner />
            <Tray>
              <TrayButton aria-label="Show hidden icons">
                <svg width="12" height="8" fill="none" stroke="#fff" strokeWidth="1.200"><path d="M1 7l5-5 5 5" /></svg>
              </TrayButton>
              <TrayButton aria-label="Network">
                <svg width="16" height="16" viewBox="0 0 16 16" fill="none" stroke="#fff"><path d="M4.500 3.500h11v8h-11zM.5 1.500h3v4h-3zM2 5.500v9M6 14.500h8M10 11.500v3" /></svg>
              </TrayButton>
              <TrayButton aria-label="Volume">
                <svg width="16" height="14" viewBox="0 0 16 14" fill="none" stroke="#fff"><path d="M1 4.500h2L6 2v10L3 9.500H1zM8 5c1 1 1 3 0 4M10.500 3c2 2 2 6 0 8" /><path d="M13 1c3 3 3 9 0 12" stroke="#a594a0" /></svg>
              </TrayButton>
              <Clock $w={64}>11:51 AM<br />3/26/2020</Clock>
              <BarButton $w={48} aria-label="Notifications">
                <svg width="24" height="28" viewBox="0 0 24 28">
                  <path d="M1 4h15v12H9l-4 4v-4H1z" fill="#fff" /><path d="M3.500 7.500h10M3.500 10h10M3.500 12.500h7" stroke="#4c2b3c" />
                  <circle cx="15.500" cy="19" r="8" fill="#3a3a3a" stroke="#999" strokeWidth=".8" />
                  {label(15.5, 23, 11, "#fff", "1", "Open Sans", "normal")}
                </svg>
              </BarButton>
            </Tray>
          </Bar>
        </RightMonitor>
      </Desktop>
    </>
  );
}
